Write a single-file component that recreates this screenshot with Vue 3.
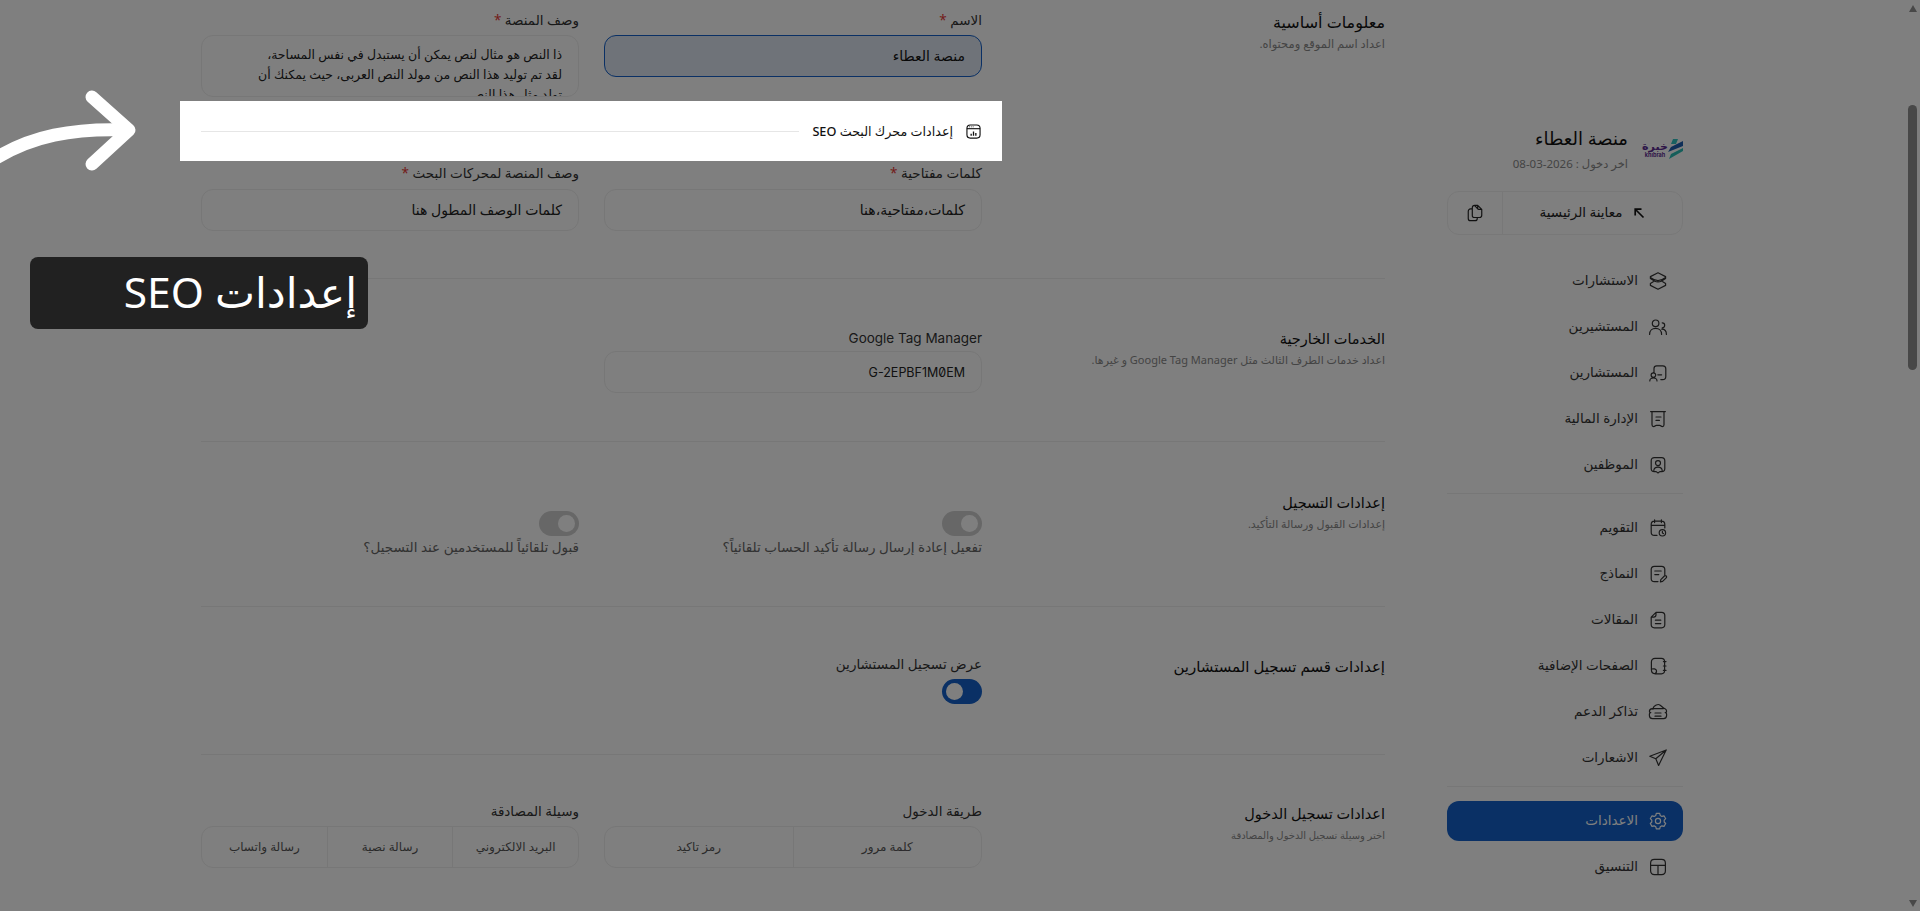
<script setup>
const topNav = [
  { label: 'الاستشارات', d: 'M10 1.800 17.600 5.600v1.800L13.600 10l4 2.600v1.800L10 18.200 2.400 14.400v-1.800L6.400 10l-4-2.600V5.600ZM2.800 6.800c4.600 3.600 9.800 3.600 14.400 0M6.400 10c2.300 1.200 4.900 1.200 7.200 0' },
  { label: 'المستشيرين', d: 'M7.600 3a3.300 3.300 0 1 1 0 6.600 3.300 3.300 0 0 1 0-6.600ZM1.600 17.400c0-3.600 2.600-6 6-6s6 2.400 6 6M14.200 5.800a2.500 2.500 0 1 1 0 5M13.800 12.200c2.600 0 4.600 2 4.600 5.200' },
  { label: 'المستشارين', d: 'M6 9V5.400c0-1.600 1-2.600 2.600-2.600h6.200c1.800 0 3 1.200 3 3v7.600c0 2-1.200 3.200-3.200 3.200h-1.800M9.800 11.800h3.800M5.400 9.800a2.300 2.300 0 1 1 0 4.600 2.300 2.300 0 0 1 0-4.600ZM1.800 18c0-1.900 1.600-3 3.600-3s3.600 1.100 3.600 3' },
  { label: 'الإدارة المالية', d: 'M2.600 2.600h14.800M4 2.600v13.200c0 1 .6 1.800 1.600 1.800 1.400 0 1.400-1.200 2.800-1.200h3.200c1.400 0 1.400 1.200 2.800 1.200 1 0 1.600-.8 1.600-1.800V2.600M8 8h5M8 11.400h3.400' },
  { label: 'الموظفين', d: 'M6.400 2.600h7.200c2 0 3.200 1.200 3.200 3.200v7.600c0 2-1.200 3.200-3.200 3.200h-1.800L10 18l-1.800-1.400H6.400c-2 0-3.200-1.200-3.200-3.200V5.800c0-2 1.200-3.200 3.200-3.200ZM10 5.600a2.500 2.500 0 1 1 0 5 2.500 2.500 0 0 1 0-5ZM5.800 15.600c.2-2.400 2-3.400 4.200-3.400s4 1 4.200 3.400' }
]
const midNav = [
  { label: 'التقويم', d: 'M9 17.400H6.400c-2 0-3.200-1.200-3.200-3.200V6.400c0-2 1.200-3.200 3.200-3.200h7.200c2 0 3.200 1.200 3.200 3.200V10M6.600 1.800v2.800M13.400 1.800v2.800M3.400 7.400h13.200M14.400 11.600a3.200 3.200 0 1 1 0 6.400 3.200 3.200 0 0 1 0-6.400ZM14.400 13.400v1.600l1 .6' },
  { label: 'النماذج', d: 'M10 17.600H6.400c-2 0-3.200-1.200-3.200-3.200V5.600c0-2 1.200-3.200 3.200-3.200h7.200c2 0 3.200 1.200 3.200 3.200v5.400M6.800 7h6.400M6.800 10.600h4M12.400 17.800l.4-2.200 3.600-3.600a1.200 1.200 0 0 1 1.800 1.800l-3.600 3.600Z' },
  { label: 'المقالات', d: 'M8 2.400h5.600c2 0 3.200 1.200 3.200 3.200v9c0 2-1.200 3.200-3.200 3.200H6.400c-2 0-3.200-1.200-3.200-3.200V7.200ZM8 2.400v2.400c0 1.400-1 2.400-2.400 2.400H3.200M7.400 10.200h5.400M7.400 13.600h5.400' },
  { label: 'الصفحات الإضافية', d: 'M7 2.400h6.400c2 0 3.200 1.200 3.200 3.200v9c0 2-1.200 3.200-3.200 3.200H7.400c-2.400 0-4-1.600-4-4V6c0-2.200 1.400-3.600 3.600-3.600ZM3.600 13c1.600-.4 4.400-.4 4.800 1.400.3 1.400-.4 2.800-1.400 3.200M15.400 5.600h2.600M15.400 10h2.600M15.400 14.400h2.600' },
  { label: 'تذاكر الدعم', d: 'M5 7.200c0-2.600 1.800-3.400 3.400-4.200 1.400-.8 2.400-.8 3.800.2l3.400 2.800 1.400.8c1 .6 1.600 1.400 1.600 2.400 0 .8-.6 1.400-1.400 1.400.8 0 1.400.6 1.400 1.400v1.600c0 1.800-1.200 3-3 3H4.400c-1.800 0-3-1.200-3-3v-1.600c0-.8.6-1.400 1.400-1.400-.8 0-1.400-.6-1.400-1.400 0-1.400 1.200-2.400 3-2.600h11M7 11h6M7 14.200h6' },
  { label: 'الاشعارات', d: 'M18.200 2 1.800 8.200l6 2.600 2.800 6.600ZM18.200 2 7.800 10.800' }
]
const gear = 'M10 7.400a2.600 2.600 0 1 1 0 5.200 2.600 2.600 0 0 1 0-5.200ZM8.300 2.300h3.400l.5 2.100 1.700 1 2.100-.6 1.700 2.900-1.500 1.500v1.800l1.500 1.500-1.700 2.900-2.100-.6-1.700 1-.5 2.100H8.300l-.5-2.100-1.700-1-2.100.6-1.700-2.900 1.500-1.500V9.200L2.300 7.700l1.700-2.900 2.100.6 1.700-1Z'
const layout = 'M6.400 2.400h7.200c2.400 0 3.800 1.400 3.800 3.800v7.600c0 2.400-1.400 3.800-3.800 3.800H6.400c-2.400 0-3.800-1.400-3.800-3.800V6.200c0-2.400 1.400-3.800 3.800-3.800ZM2.800 8.400h14.400M10 8.400v9.200'
</script>

<template>
  <div class="page">
    <div class="scrollstrip">
      <span class="sb-up"></span>
      <span class="sb-thumb"></span>
      <span class="sb-down"></span>
    </div>

    <aside class="sidebar">
      <header class="brand">
        <div class="logo">
          <svg width="15" height="20" viewBox="0 0 15 20"><path d="M5 0h5L8 5H3Z" fill="#33c3c3"/><path d="M15 2v5L0 13l3-5Z" fill="#1f5fb0"/><path d="M15 9v3L1 20l2-5Z" fill="#2bbdb5"/></svg>
          <div class="logo-text"><b>خبرة</b><i>khibrah</i></div>
        </div>
        <div class="brand-info">
          <div class="brand-name">منصة العطاء</div>
          <div class="brand-date">اخر دخول : 2026-03-08</div>
        </div>
      </header>

      <div class="preview">
        <div class="preview-main">
          <svg width="12" height="12" viewBox="0 0 12 12" fill="none" stroke="#111" stroke-width="1.700"><path d="M2.200 8.500V2.200h6.300M2.500 2.500l8 8"/></svg>
          <span>معاينة الرئيسية</span>
        </div>
        <div class="preview-copy">
          <svg width="18" height="18" viewBox="0 0 20 20" fill="none" stroke="#222" stroke-width="1.300" stroke-linejoin="round" stroke-linecap="round"><path d="M7 5.500H5c-1.500 0-2.500 1-2.500 2.500v8c0 1.500 1 2.500 2.500 2.500h5c1.500 0 2.500-1 2.500-2.500v-1M7 13V4c0-1.500 1-2.500 2.500-2.500H13l4.500 4.500v6.500c0 1.500-1 2.500-2.500 2.500H9.500C8 15 7 14.500 7 13ZM13 1.500V5c0 .7.400 1 1 1h3.500M9.500 1.500l3.500 4"/></svg>
        </div>
      </div>

      <nav class="nav">
        <a v-for="item in topNav" :key="item.label" class="nav-item">
          <svg class="nav-icon" viewBox="0 0 20 20"><path :d="item.d"/></svg>
          <span>{{ item.label }}</span>
        </a>
        <hr class="nav-rule" />
        <a v-for="item in midNav" :key="item.label" class="nav-item">
          <svg class="nav-icon" viewBox="0 0 20 20"><path :d="item.d"/></svg>
          <span>{{ item.label }}</span>
        </a>
        <hr class="nav-rule" />
        <a class="nav-item nav-active">
          <svg class="nav-icon" viewBox="0 0 20 20"><path :d="gear"/></svg>
          <span>الاعدادات</span>
        </a>
        <a class="nav-item">
          <svg class="nav-icon" viewBox="0 0 20 20"><path :d="layout"/></svg>
          <span>التنسيق</span>
        </a>
      </nav>
    </aside>

    <main class="main">
      <section class="section s1">
        <div class="head">
          <h3>معلومات أساسية</h3>
          <p>اعداد اسم الموقع ومحتواه.</p>
        </div>
        <div class="form">
          <div class="grid">
            <div class="field">
              <label>الاسم <em>*</em></label>
              <div class="input focused">منصة العطاء</div>
            </div>
            <div class="field">
              <label>وصف المنصة <em>*</em></label>
              <div class="input area">
                <div>ذا النص هو مثال لنص يمكن أن يستبدل في نفس المساحة،</div>
                <div>لقد تم توليد هذا النص من مولد النص العربى، حيث يمكنك أن</div>
                <div>تولد مثل هذا النص</div>
              </div>
            </div>
          </div>

          <div class="band">
            <svg width="15" height="15" viewBox="0 0 16 16" fill="none" stroke="#111" stroke-width="1.200"><rect x="1" y="1" width="14" height="14" rx="3.500"/><path d="M1 5h14"/><path d="M3.200 3h.8M5.200 3h.8M7.200 3h.8" stroke-width="1"/><path d="M5.500 12.500V10.500M8 12.500V8M10.500 12.500V9.500" stroke-width="1.400"/></svg>
            <span>إعدادات محرك البحث SEO</span>
            <i class="band-line"></i>
          </div>

          <div class="grid row2">
            <div class="field">
              <label>كلمات مفتاحية <em>*</em></label>
              <div class="input">كلمات،مفتاحية،هنا</div>
            </div>
            <div class="field">
              <label>وصف المنصة لمحركات البحث <em>*</em></label>
              <div class="input">كلمات الوصف المطول هنا</div>
            </div>
          </div>
        </div>
      </section>

      <section class="section s2">
        <div class="head">
          <h3>الخدمات الخارجية</h3>
          <p>اعداد خدمات الطرف الثالث مثل Google Tag Manager و غيرها.</p>
        </div>
        <div class="form grid">
          <div class="field">
            <label class="latin">Google Tag Manager</label>
            <div class="input code">G-2EPBF1M0EM</div>
          </div>
        </div>
      </section>

      <section class="section s3">
        <div class="head">
          <h3>إعدادات التسجيل</h3>
          <p>إعدادات القبول ورسالة التأكيد.</p>
        </div>
        <div class="form grid toggles">
          <div class="field">
            <span class="toggle off"><i></i></span>
            <label class="muted">تفعيل إعادة إرسال رسالة تأكيد الحساب تلقائياً؟</label>
          </div>
          <div class="field">
            <span class="toggle off"><i></i></span>
            <label class="muted">قبول تلقائياً للمستخدمين عند التسجيل؟</label>
          </div>
        </div>
      </section>

      <section class="section s4">
        <div class="head">
          <h3>إعدادات قسم تسجيل المستشارين</h3>
        </div>
        <div class="form grid">
          <div class="field">
            <label>عرض تسجيل المستشارين</label>
            <span class="toggle on"><i></i></span>
          </div>
        </div>
      </section>

      <section class="section s5">
        <div class="head">
          <h3>اعدادات تسجيل الدخول</h3>
          <p>اختر وسيلة تسجيل الدخول والمصادقة</p>
        </div>
        <div class="form grid">
          <div class="field">
            <label>طريقة الدخول</label>
            <div class="segments">
              <span>كلمة مرور</span>
              <span>رمز تاكيد</span>
            </div>
          </div>
          <div class="field">
            <label>وسيلة المصادقة</label>
            <div class="segments">
              <span>البريد الالكتروني</span>
              <span>رسالة نصية</span>
              <span>رسالة واتساب</span>
            </div>
          </div>
        </div>
      </section>
    </main>

    <div class="dim"></div>

    <svg class="arrow" width="150" height="190" viewBox="0 0 150 190" fill="none" stroke="#fff" stroke-width="13" stroke-linecap="round" stroke-linejoin="round">
      <path d="M-10 162C30 135 75 128 128 130"/>
      <path d="M92 97 129 130 92 164"/>
    </svg>

    <div class="badge">إعدادات SEO</div>
  </div>
</template>

<style>
html, body { margin: 0; overflow: hidden; }
</style>

<style scoped>
.page {
  position: relative;
  display: flex;
  direction: rtl;
  width: 1920px;
  height: 911px;
  overflow: hidden;
  background: #fff;
  font-family: "Noto Sans", "DejaVu Sans", Inter, sans-serif;
  color: #222;
}
.scrollstrip {
  flex: 0 0 15px;
  display: flex;
  flex-direction: column;
  align-items: center;
}
.sb-up, .sb-down {
  width: 0; height: 0;
  border-left: 4.500px solid transparent;
  border-right: 4.500px solid transparent;
}
.sb-up { border-bottom: 7px solid #909090; margin-top: 5px; }
.sb-down { border-top: 7px solid #909090; margin-top: 530px; }
.sb-thumb { width: 9px; height: 265px; margin-top: 93px; border-radius: 5px; background: #909090; }

.sidebar { flex: 0 0 236px; margin-inline-start: 222px; padding-top: 128px; }
.brand { display: flex; align-items: flex-start; gap: 16px; height: 63px; }
.logo { width: 39px; display: flex; align-items: center; gap: 2px; margin-top: 11px; }
.logo svg { flex: none; }
.logo-text { width: 22px; display: flex; flex-direction: column; align-items: center; line-height: 1; }
.logo-text b { font-size: 11px; line-height: 13px; color: #5c2d91; font-weight: 700; }
.logo-text i { font: 700 5.500px/7px Inter, sans-serif; color: #5c2d91; }
.brand-name { font-size: 18px; line-height: 20px; font-weight: 500; color: #111; }
.brand-date { font-size: 11.500px; line-height: 20px; margin-top: 6px; color: #888; }

.preview { display: flex; height: 44px; box-sizing: border-box; border: 1px solid #f0f0f0; border-radius: 12px; }
.preview-main { flex: 1; display: flex; align-items: center; justify-content: center; gap: 11px; border-left: 1px solid #f0f0f0; font-size: 13.500px; font-weight: 500; color: #222; }
.preview-main span { padding-bottom: 2px; }
.preview-copy { width: 54px; display: flex; align-items: center; justify-content: center; }

.nav { display: flex; flex-direction: column; gap: 6px; margin-top: 26px; }
.nav-item { display: flex; align-items: center; gap: 10px; height: 40px; padding-inline-start: 15px; border-radius: 12px; font-size: 13.500px; color: #333; }
.nav-item span { padding-bottom: 2px; }
.nav-icon { width: 20px; height: 20px; fill: none; stroke: #333; stroke-width: 1.200; stroke-linecap: round; stroke-linejoin: round; }
.nav-rule { border: 0; border-top: 1px solid #eee; margin: 2px 0 8px; }
.nav-active { background: #1461ca; color: #fff; }
.nav-active .nav-icon { stroke: #fff; }

.main { flex: 0 0 1184px; margin-inline-start: 62px; }
.section { display: flex; border-bottom: 1px solid #eee; }
.head { flex: 0 0 403px; }
.head h3 { margin: 0 0 2px; font-size: 14.500px; line-height: 20px; font-weight: 500; color: #111; }
.head p { margin: 0; font-size: 11px; line-height: 20px; color: #888; }
.form { flex: 0 0 781px; }
.grid { display: grid; grid-template-columns: 378px 378px; gap: 25px; align-content: start; }

.s1 { padding: 10px 0 47px; }
.s1 .head { padding-top: 2px; }
.s1 .head h3 { font-size: 16px; }
.s1 .head p { font-size: 11.500px; }
.s2 { padding: 47px 0 48px; }
.s2 .head { padding-top: 2px; }
.s3 { padding: 50px 0 49px; }
.s4 { padding: 47px 0 50px; }
.s4 .head { padding-top: 2px; }
.s4 .head h3 { font-size: 15px; }
.s5 { padding: 46px 0 60px; border-bottom: 0; }
.s5 .head { padding-top: 2px; }
.s5 .head p { font-size: 10px; }

.field label { display: block; font-size: 13.500px; line-height: 20px; margin-bottom: 5px; color: #333; }
.row2 .field label { line-height: 18px; margin-bottom: 7px; }
.field label em { font-style: normal; color: #e53935; }
.field label.latin { font-family: Inter, sans-serif; font-size: 13.500px; margin-bottom: 3px; padding-top: 2px; }
.field label.muted { margin: 1px 0 0; color: #666; }
.input { box-sizing: border-box; height: 42px; padding: 0 16px 2px; display: flex; align-items: center; border: 1px solid #eee; border-radius: 12px; font-size: 14px; font-weight: 500; color: #222; }
.input.focused { background: #dfe7f3; border-color: #1461ca; color: #111; }
.input.area { display: block; height: 62px; padding: 9px 16px 0; font-size: 12.500px; line-height: 20px; overflow: hidden; white-space: nowrap; }
.input.code { padding-bottom: 0; font-family: Inter, sans-serif; font-feature-settings: "zero"; font-size: 12.500px; font-weight: 400; }

.band {
  position: relative;
  z-index: 6;
  display: flex;
  align-items: center;
  gap: 13px;
  height: 60px;
  margin: 4px -20px 3px -21px;
  padding: 0 21px 0 21px;
  background: #fff;
  font-size: 12.700px;
  font-weight: 500;
  color: #111;
}
.band-line { flex: 1; border-top: 1px solid #e6e6e6; margin-top: 1px; }

.toggles { padding-top: 19px; }
.toggle { display: flex; align-items: center; width: 40px; height: 25px; box-sizing: border-box; padding: 0 4px; border-radius: 13px; }
.toggle i { width: 17px; height: 17px; border-radius: 50%; background: #fff; }
.toggle.off { background: #cfcfcf; justify-content: flex-start; }
.toggle.on { background: #1461ca; justify-content: flex-end; }

.segments { display: flex; height: 42px; box-sizing: border-box; border: 1px solid #eee; border-radius: 12px; }
.segments span { flex: 1; display: flex; align-items: center; justify-content: center; padding-bottom: 2px; font-size: 12px; color: #555; }
.segments span + span { border-right: 1px solid #eee; }

.dim { position: absolute; inset: 0; z-index: 5; background: rgba(0, 0, 0, .5); }
.arrow { position: absolute; left: 0; top: 0; z-index: 6; }
.badge {
  position: absolute;
  left: 30px;
  top: 257px;
  z-index: 6;
  box-sizing: border-box;
  width: 338px;
  height: 72px;
  padding-inline-start: 11px;
  border-radius: 8px;
  background: #212121;
  color: #fff;
  font-size: 42.500px;
  line-height: 70px;
}
</style>
